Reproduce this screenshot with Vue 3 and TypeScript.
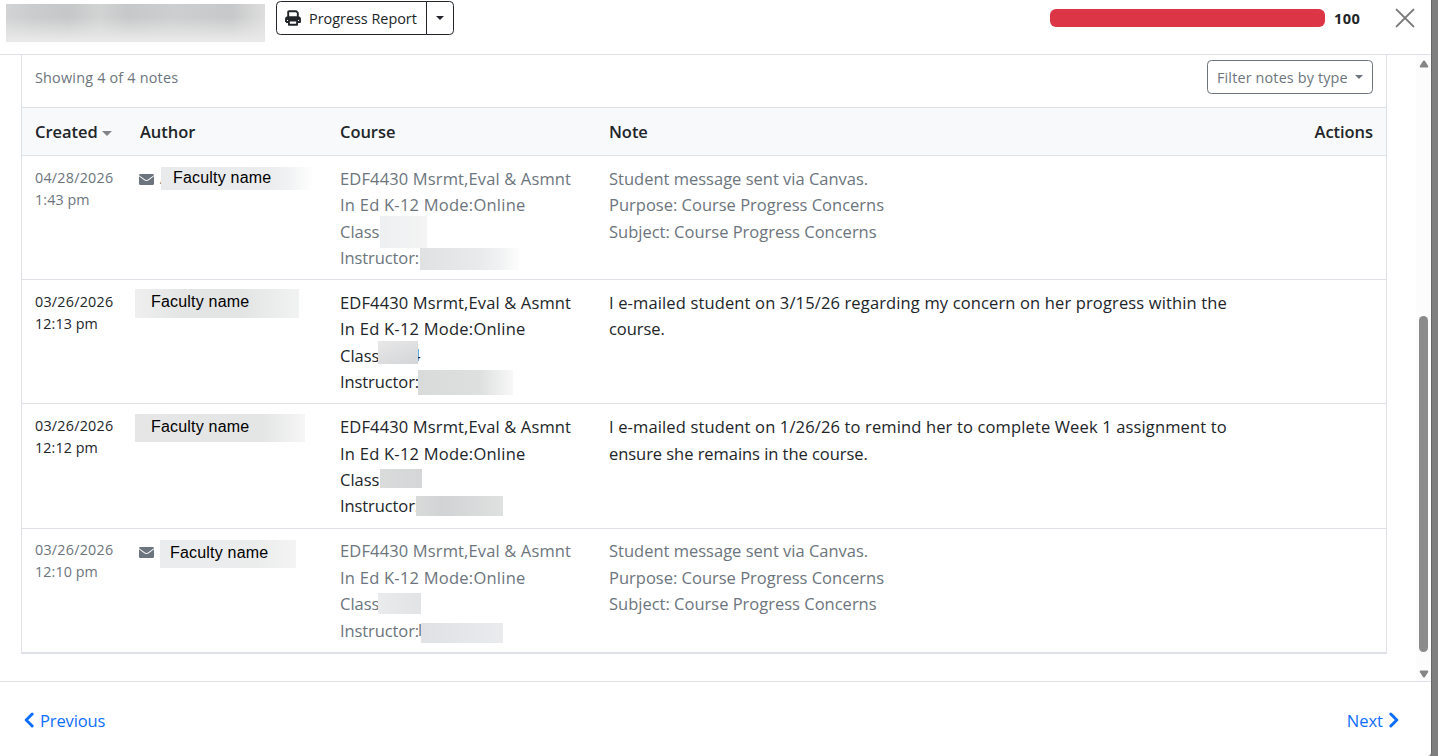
<script setup lang="ts">
interface Mask { x: number; y: number; w: number; h: number; fill: string }
interface Fragment { x: number; y: number; text: string }
interface NoteRow {
  date: string
  time: string
  muted: boolean
  author: Mask & { labelX: number; labelY: number }
  initial: boolean
  masks: Mask[]
  fragments: Fragment[]
  note: string[]
}

const courseLines = ['EDF4430 Msrmt,Eval & Asmnt', 'In Ed K-12 Mode:Online', 'Class', 'Instructor:']
const canvasNote = [
  'Student message sent via Canvas.',
  'Purpose: Course Progress Concerns',
  'Subject: Course Progress Concerns',
]

const rows: NoteRow[] = [
  {
    date: '04/28/2026', time: '1:43 pm', muted: true, initial: true,
    author: { x: 34, y: 11, w: 156, h: 23, labelX: 12, labelY: 0, fill: 'linear-gradient(90deg,#e9eaeb 0,#ebeced 68%,#f1f2f3 82%,#fff 98%)' },
    masks: [
      { x: 53, y: 60, w: 47, h: 32, fill: 'linear-gradient(90deg,#eeeff1,#f4f4f4)' },
      { x: 93, y: 92, w: 99, h: 22, fill: 'linear-gradient(90deg,#e0e1e3,#e9eaec 60%,#f1f2f3 82%,#fdfdfd)' },
    ],
    fragments: [], note: canvasNote,
  },
  {
    date: '03/26/2026', time: '12:13 pm', muted: false, initial: false,
    author: { x: 8, y: 9, w: 164, h: 29, labelX: 16, labelY: 2, fill: 'linear-gradient(90deg,#efefef 0,#e3e4e4 30%,#e3e4e4 65%,#f1f2f2 100%)' },
    masks: [
      { x: 51, y: 61, w: 40, h: 23, fill: 'linear-gradient(160deg,#e8e8e9,#d4d5d6)' },
      { x: 91, y: 90, w: 95, h: 25, fill: 'linear-gradient(90deg,#d9dada,#dedfdf 65%,#f8f8f8)' },
    ],
    fragments: [{ x: 84, y: 62, text: '4' }],
    note: ['I e-mailed student on 3/15/26 regarding my concern on her progress within the', 'course.'],
  },
  {
    date: '03/26/2026', time: '12:12 pm', muted: false, initial: false,
    author: { x: 8, y: 10, w: 170, h: 28, labelX: 16, labelY: 2, fill: 'linear-gradient(90deg,#e6e6e6 0,#e4e5e5 75%,#f6f6f6 100%)' },
    masks: [
      { x: 53, y: 65, w: 42, h: 19, fill: 'linear-gradient(90deg,#dadbdb,#d5d6d7)' },
      { x: 89, y: 92, w: 87, h: 20, fill: 'linear-gradient(90deg,#d9dada,#d2d3d4 30%,#dfe0e0)' },
    ],
    fragments: [],
    note: ['I e-mailed student on 1/26/26 to remind her to complete Week 1 assignment to', 'ensure she remains in the course.'],
  },
  {
    date: '03/26/2026', time: '12:10 pm', muted: true, initial: true,
    author: { x: 33, y: 11, w: 136, h: 28, labelX: 10, labelY: 2, fill: 'linear-gradient(90deg,#ebecee 0,#ebecec 70%,#f4f4f5 100%)' },
    masks: [
      { x: 51, y: 64, w: 43, h: 21, fill: 'linear-gradient(90deg,#eaebed,#e1e3e5)' },
      { x: 94, y: 94, w: 82, h: 20, fill: 'linear-gradient(90deg,#dfe1e4,#eaebed)' },
    ],
    fragments: [{ x: 91, y: 88, text: 'l' }],
    note: canvasNote,
  },
]

const maskStyle = (m: Mask) => ({
  left: `${m.x}px`, top: `${m.y}px`, width: `${m.w}px`, height: `${m.h}px`, background: m.fill,
})
</script>

<template>
  <div class="backdrop">
    <div class="modal">
      <header class="head">
        <div class="student"></div>
        <div class="btn-group">
          <button class="btn report">
            <svg width="16" height="16" viewBox="0 0 16 16" fill="none">
              <path d="M3.2 7V2Q3.2 1.2 4 1.2H11.2L12.8 2.8V7M1 12V9.2Q1 7.2 3 7.2H13Q15 7.2 15 9.2V12H12.5M1 12H3.5M3.9 10.6H12.1V14.8H3.9Z" stroke="#212529" stroke-width="1.9" stroke-linejoin="round" />
              <path d="M1.5 7.5H14.5V10H1.5Z" fill="#212529" />
            </svg>
            <span class="report-label">Progress Report</span>
          </button>
          <button class="btn toggle"><i class="caret"></i></button>
        </div>
        <div class="score">
          <div class="bar"></div>
          <b>100</b>
        </div>
        <svg class="close" width="20" height="20" viewBox="0 0 20 20">
          <path d="M1.6 1.6L18.4 18.4M18.4 1.6L1.6 18.4" stroke="#7a7a7a" stroke-width="2" stroke-linecap="round" />
        </svg>
      </header>

      <div class="body">
        <section class="card">
          <div class="toolbar">
            <span class="showing">Showing 4 of 4 notes</span>
            <button class="btn filter"><span class="filter-label">Filter notes by type</span><i class="caret"></i></button>
          </div>
          <div class="row thead">
            <div class="cell">Created<i class="caret sort"></i></div>
            <div class="cell">Author</div>
            <div class="cell">Course</div>
            <div class="cell">Note</div>
            <div class="cell actions">Actions</div>
          </div>
          <div v-for="(r, i) in rows" :key="i" class="row entry" :class="{ muted: r.muted }">
            <div class="cell date"><div>{{ r.date }}</div><div class="time">{{ r.time }}</div></div>
            <div class="cell author">
              <template v-if="r.initial">
                <svg class="mail" width="15" height="11" viewBox="0 0 15 12" preserveAspectRatio="none">
                  <path d="M1.2 0H13.8Q15 0 15 1.3L9 6Q7.5 7.1 6 6L0 1.3Q0 0 1.2 0ZM0 2.5L5.3 6.8Q7.5 8.4 9.7 6.8L15 2.5V10.6Q15 12 13.6 12H1.4Q0 12 0 10.6Z" fill="#6c757d" />
                </svg>
                <span class="initial">A</span>
              </template>
              <div class="mask" :style="maskStyle(r.author)">
                <span class="faculty" :style="{ left: r.author.labelX + 'px', top: r.author.labelY + 'px' }">Faculty name</span>
              </div>
            </div>
            <div class="cell course">
              <div v-for="(l, n) in courseLines" :key="l" :class="'line' + n">{{ l }}</div>
              <span v-for="f in r.fragments" :key="f.text" class="fragment" :style="{ left: f.x + 'px', top: f.y + 'px' }">{{ f.text }}</span>
              <div v-for="(m, k) in r.masks" :key="k" class="mask" :style="maskStyle(m)"></div>
            </div>
            <div class="cell note"><div v-for="l in r.note" :key="l">{{ l }}</div></div>
            <div class="cell"></div>
          </div>
        </section>
        <div class="scrollbar">
          <svg width="10" height="8" viewBox="0 0 10 8"><path d="M5 .5Q5.6.5 6 1L9.2 6Q9.6 7.5 8.5 7.5H1.5Q.4 7.5.8 6L4 1Q4.4.5 5 .5Z" fill="#858585" /></svg>
          <div class="thumb"></div>
          <svg class="down" width="10" height="8" viewBox="0 0 10 8"><path d="M5 7.5Q5.6 7.5 6 7L9.2 2Q9.6.5 8.5.5H1.5Q.4.5.8 2L4 7Q4.4 7.5 5 7.5Z" fill="#858585" /></svg>
        </div>
      </div>

      <footer class="foot">
        <a class="link previous"><svg width="10" height="16" viewBox="0 0 10 16"><path d="M8.2 2L2.2 8L8.2 14" fill="none" stroke="#0d6efd" stroke-width="2.9" stroke-linecap="round" stroke-linejoin="round" /></svg><span>Previous</span></a>
        <a class="link"><span>Next</span><svg width="10" height="16" viewBox="0 0 10 16"><path d="M1.8 2L7.8 8L1.8 14" fill="none" stroke="#0d6efd" stroke-width="2.9" stroke-linecap="round" stroke-linejoin="round" /></svg></a>
      </footer>
    </div>
  </div>
</template>

<style>
html, body { margin: 0; overflow: hidden; }
</style>

<style scoped>
* { box-sizing: border-box; }
.backdrop { width: 1438px; height: 756px; background: #7f7f7f; overflow: hidden; }
.modal {
  width: 1432px; height: 756px; background: #fff; display: flex; flex-direction: column;
  border-right: 1px solid #666; border-bottom-right-radius: 4px;
  font: 16.5px/26.4px "Open Sans", "Noto Sans", sans-serif; color: #212529; white-space: nowrap;
}
.head { height: 55px; flex: none; border-bottom: 1px solid #dee2e6; display: flex; align-items: flex-start; padding: 0 16px 0 6px; }
.student {
  width: 259px; height: 38px; margin-top: 4px;
  background:
    linear-gradient(180deg, rgba(232,232,232,0) 35%, #e9e9e9 95%),
    linear-gradient(90deg, #d2d3d4, #cbcccd 10%, #c6c7c8 24%, #d2d3d3 36%, #c7c8c9 47%, #cdcecf 65%, #c7c8c9 87%, #dedede 100%);
}
.btn {
  font: inherit; color: inherit; background: #fff; border: 1px solid #212529; border-radius: 4.4px; padding: 0;
  display: flex; align-items: center; height: 34px;
}
.btn-group { display: flex; margin: 1px 0 0 11px; }
.report { width: 151px; border-radius: 4.4px 0 0 4.4px; padding-left: 8px; font-size: 14.4px; }
.report-label { margin: 2px 0 0 8px; }
.toggle { width: 28px; margin-left: -1px; border-radius: 0 4.4px 4.4px 0; justify-content: center; }
.caret { width: 0; height: 0; border: 4.5px solid transparent; border-top-color: currentColor; border-bottom: 0; }
.score { display: flex; align-items: center; margin-left: auto; height: 36px; }
.bar { width: 275px; height: 18px; border-radius: 6px; background: #dc3545; }
.score b { font-size: 14.6px; font-weight: 700; letter-spacing: .4px; margin-left: 9px; width: 27px; }
.close { margin: 8px 0 0 34px; }

.body { height: 626px; flex: none; display: flex; justify-content: space-between; }
.card { width: 1366px; height: 599px; margin-left: 21px; border: 1px solid #dee2e6; border-top: 0; }
.toolbar { height: 53px; border-bottom: 1px solid #dee2e6; display: flex; justify-content: space-between; align-items: flex-start; padding: 5px 13px 0; color: #6c757d; font-size: 14.4px; letter-spacing: .2px; }
.showing { line-height: 36px; }
.filter { width: 166px; border-color: #6c757d; justify-content: space-between; padding: 0 9px; letter-spacing: .15px; }
.filter-label { padding-top: 2px; }
.row { display: grid; grid-template-columns: 105px 200px 269px 640px 1fr; }
.cell { padding-left: 13px; position: relative; }
.thead { height: 48px; background: #f8f9fa; border-bottom: 1px solid #dee2e6; font-weight: 600; line-height: 48px; letter-spacing: -0.05px; }
.sort { display: inline-block; margin-left: 4px; vertical-align: 2px; color: #808488; border-width: 5px 5px 0; }
.actions { text-align: right; padding-right: 13px; }
.entry { height: 124.2px; border-bottom: 1px solid #dee2e6; }
.entry > .cell { padding-top: 9.8px; }
.muted { color: #6c757d; }
.entry > .date { padding-top: 10.6px; font-size: 14.3px; line-height: 22px; letter-spacing: .25px; }
.time { letter-spacing: .1px; }
.line0 { letter-spacing: .14px; }
.line1 { letter-spacing: .24px; }
.line3 { letter-spacing: -.1px; }
.note > div { letter-spacing: .14px; }
.note > div:nth-child(2) { letter-spacing: -.05px; }
.muted .note > div { letter-spacing: 0; }
.mail { position: absolute; left: 12.4px; top: 18px; }
.initial { position: absolute; left: 33px; top: 9px; }
.mask { position: absolute; }
.faculty { position: absolute; font: 16px/22px "Liberation Sans", Arial, sans-serif; letter-spacing: .2px; color: #000; }
.fragment { position: absolute; }

.foot { height: 75px; flex: none; border-top: 1px solid #dee2e6; display: flex; justify-content: space-between; align-items: center; padding: 2px 32px 0 24px; color: #0d6efd; }
.link { display: flex; align-items: center; gap: 6px; }
.link span { padding-top: 2px; }
.previous { letter-spacing: -.12px; }
.scrollbar { width: 15px; background: #fcfcfc; display: flex; flex-direction: column; align-items: center; padding-top: 5px; }
.thumb { width: 9px; height: 336px; border-radius: 4.5px; background: #8b8b8b; margin-top: 248px; }
.down { margin-top: 17.5px; }
</style>
